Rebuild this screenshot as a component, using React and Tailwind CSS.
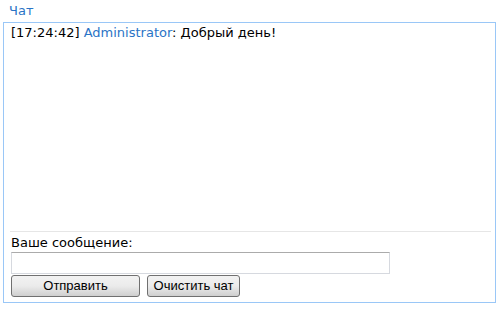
export default function App() {
  const font = { fontFamily: '"DejaVu Sans", Verdana, sans-serif' };
  return (
    <div className="w-[500px] h-[311px] bg-white text-[13px] leading-[16px] text-black" style={font}>
      <div className="h-[22px] pl-[9px] pt-[3px] text-[#2a74c6]">Чат</div>
      <div className="ml-[3px] w-[493px] h-[281px] border border-[#9ac7f7] flex flex-col">
        <div className="h-[208px] pl-[7px] pt-[2px]">
          <span>[17:24:42] </span>
          <span className="text-[#2a74c6]">Administrator</span>
          <span>: Добрый день!</span>
        </div>
        <div className="ml-[6px] mr-[4px] border-t border-[#e6e6e6]" />
        <div className="pl-[7px] pt-[3px]">
          <div className="h-[16px]">Ваше сообщение:</div>
          <div className="mt-[1px] w-[379px] h-[22px] border border-[#d6d9df] border-t-[#ababab]" />
          <div className="mt-[1px] flex gap-[7px]" style={{ fontFamily: '"Liberation Sans", Arial, sans-serif' }}>
            <button className="w-[129px] h-[22px] border border-[#707070] rounded-[3px] bg-gradient-to-b from-[#f2f2f2] via-[#ebebeb] to-[#cfcfcf] text-[13px] leading-[18px] text-black">Отправить</button>
            <button className="w-[93px] h-[22px] border border-[#707070] rounded-[3px] bg-gradient-to-b from-[#f2f2f2] via-[#ebebeb] to-[#cfcfcf] text-[13px] leading-[18px] text-black">Очистить чат</button>
          </div>
        </div>
      </div>
    </div>
  );
}
